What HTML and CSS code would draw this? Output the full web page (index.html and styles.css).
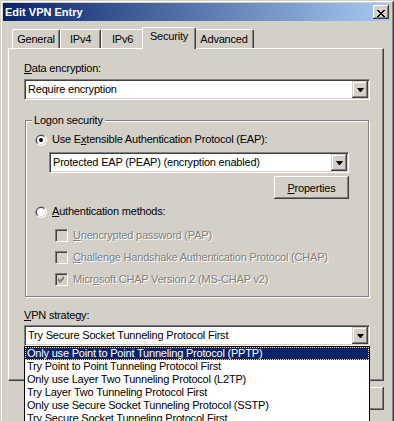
FILE: index.html
```html
<!DOCTYPE html>
<html lang="en">
<head>
    <meta charset="UTF-8">
    <meta name="viewport" content="width=device-width, initial-scale=1.0">
    <title>Edit VPN Entry</title>
    <link rel="stylesheet" href="styles.css">
</head>
<body>
    <div class="window">
        <div class="titlebar">
            <span class="title">Edit VPN Entry</span>
            <span class="close">
                <svg width="8" height="7" viewBox="0 0 8 7"><path fill="#000" d="M0 0h2v1h-2z M6 0h2v1h-2z M1 1h2v1h-2z M5 1h2v1h-2z M2 2h4v1h-4z M3 3h2v1h-2z M2 4h4v1h-4z M1 5h2v1h-2z M5 5h2v1h-2z M0 6h2v1h-2z M6 6h2v1h-2z"/></svg>
            </span>
        </div>

        <div class="client">
            <div class="tabs">
                <div class="tab tab-general">General</div>
                <div class="tab tab-ipv4">IPv4</div>
                <div class="tab tab-ipv6">IPv6</div>
                <div class="tab tab-security active">Security</div>
                <div class="tab tab-advanced">Advanced</div>
            </div>

            <div class="panel">
                <div class="field-label"><u>D</u>ata encryption:</div>
                <div class="combo">
                    <span class="combo-text">Require encryption</span>
                    <span class="combo-btn"><svg width="7" height="4" viewBox="0 0 7 4"><polygon points="0,0 7,0 4,4 3,4" fill="#000"/></svg></span>
                </div>

                <fieldset class="group">
                    <legend>Logon security</legend>

                    <div class="option">
                        <svg class="radio" width="12" height="12" viewBox="0 0 12 12">
                            <circle cx="6" cy="6" r="6" fill="#fff"/>
                            <path d="M1.76 10.24 A6 6 0 0 1 10.24 1.76 Z" fill="#808080"/>
                            <circle cx="6" cy="6" r="5" fill="#d4d0c8"/>
                            <path d="M2.46 9.54 A5 5 0 0 1 9.54 2.46 Z" fill="#404040"/>
                            <circle cx="6" cy="6" r="4" fill="#fff"/>
                            <circle cx="6" cy="6" r="2" fill="#000"/>
                        </svg>
                        <span>Use E<u>x</u>tensible Authentication Protocol (EAP):</span>
                    </div>

                    <div class="combo combo-eap">
                        <span class="combo-text">Protected EAP (PEAP) (encryption enabled)</span>
                        <span class="combo-btn"><svg width="7" height="4" viewBox="0 0 7 4"><polygon points="0,0 7,0 4,4 3,4" fill="#000"/></svg></span>
                    </div>

                    <div class="btn-row">
                        <button class="btn"><u>P</u>roperties</button>
                    </div>

                    <div class="option option-auth">
                        <svg class="radio" width="12" height="12" viewBox="0 0 12 12">
                            <circle cx="6" cy="6" r="6" fill="#fff"/>
                            <path d="M1.76 10.24 A6 6 0 0 1 10.24 1.76 Z" fill="#808080"/>
                            <circle cx="6" cy="6" r="5" fill="#d4d0c8"/>
                            <path d="M2.46 9.54 A5 5 0 0 1 9.54 2.46 Z" fill="#404040"/>
                            <circle cx="6" cy="6" r="4" fill="#fff"/>
                        </svg>
                        <span><u>A</u>uthentication methods:</span>
                    </div>

                    <div class="check disabled">
                        <span class="box"></span>
                        <span><u>U</u>nencrypted password (PAP)</span>
                    </div>
                    <div class="check disabled">
                        <span class="box"></span>
                        <span><u>C</u>hallenge Handshake Authentication Protocol (CHAP)</span>
                    </div>
                    <div class="check disabled">
                        <span class="box">
                            <svg width="7" height="7" viewBox="0 0 7 7"><polygon points="0,2 2,4 6,0 6,3 2,7 0,5" fill="#808080"/></svg>
                        </span>
                        <span>Micr<u>o</u>soft CHAP Version 2 (MS-CHAP v2)</span>
                    </div>
                </fieldset>

                <div class="field-label label-vpn"><u>V</u>PN strategy:</div>
                <div class="combo-wrap">
                    <div class="combo">
                        <span class="combo-text">Try Secure Socket Tunneling Protocol First</span>
                        <span class="combo-btn"><svg width="7" height="4" viewBox="0 0 7 4"><polygon points="0,0 7,0 4,4 3,4" fill="#000"/></svg></span>
                    </div>
                    <ul class="dropdown">
                        <li class="selected">Only use Point to Point Tunneling Protocol (PPTP)</li>
                        <li>Try Point to Point Tunneling Protocol First</li>
                        <li>Only use Layer Two Tunneling Protocol (L2TP)</li>
                        <li>Try Layer Two Tunneling Protocol First</li>
                        <li>Only use Secure Socket Tunneling Protocol (SSTP)</li>
                        <li>Try Secure Socket Tunneling Protocol First</li>
                        <li>Automatic</li>
                    </ul>
                </div>
            </div>

            <div class="buttons">
                <button class="btn">OK</button>
                <button class="btn">Cancel</button>
            </div>
        </div>
    </div>
</body>
</html>
```

FILE: styles.css
```css
* {
    box-sizing: border-box;
}

body {
    margin: 0;
    width: 394px;
    height: 421px;
    overflow: hidden;
    background: #d4d0c8;
    font-family: "Liberation Sans", Arial, sans-serif;
    font-size: 11px;
    letter-spacing: -0.2px;
    color: #000;
}

u {
    text-decoration: underline;
    text-underline-offset: 1px;
}

.window {
    height: 460px;
    padding: 3px 4px 0 3px;
    background: #d4d0c8;
    box-shadow: inset 1px 1px 0 #d4d0c8, inset -1px -1px 0 #404040, inset 2px 2px 0 #fff, inset -2px -2px 0 #808080;
}

.titlebar {
    height: 18px;
    display: flex;
    align-items: center;
    justify-content: space-between;
    padding: 0 1px 0 2px;
    background: linear-gradient(to right, #0a246a, #a6caf0);
}

.title {
    color: #fff;
    font-weight: bold;
    letter-spacing: 0;
}

.close {
    width: 16px;
    height: 14px;
    display: flex;
    justify-content: center;
    align-items: center;
    padding-top: 2px;
    background: #d4d0c8;
    box-shadow: inset -1px -1px 0 #404040, inset 1px 1px 0 #fff, inset -2px -2px 0 #808080;
}

.close svg {
    display: block;
}

.client {
    padding: 6px 6px 0 5px;
}

/* tabs */

.tabs {
    display: flex;
    align-items: flex-end;
    height: 21px;
    padding-left: 4px;
}

.tab {
    height: 19px;
    padding-top: 3px;
    line-height: 13px;
    text-align: center;
    border-top: 1px solid #fff;
    border-left: 1px solid #fff;
    border-right: 1px solid #404040;
    border-radius: 2px 2px 0 0;
    box-shadow: inset -1px 0 0 #808080;
}

.tab-general { width: 48px; }
.tab-ipv4 { width: 41px; }
.tab-ipv6 { width: 43px; }
.tab-security { width: 50px; }
.tab-advanced { width: 60px; }

.tab.active {
    position: relative;
    z-index: 1;
    width: 54px;
    height: 22px;
    margin: 0 -2px -1px;
    padding-top: 2px;
    background: #d4d0c8;
}

.panel {
    height: 333px;
    padding: 13px 13px 0 15px;
    border: 1px solid;
    border-color: #fff #404040 #404040 #fff;
    box-shadow: inset -1px -1px 0 #808080;
}

.field-label {
    height: 13px;
    line-height: 13px;
}

/* combo boxes */

.combo {
    display: flex;
    height: 21px;
    margin-top: 4px;
    padding: 1px;
    background: #fff;
    border: 1px solid;
    border-color: #808080 #fff #fff #808080;
    box-shadow: inset 1px 1px 0 #404040, inset -1px -1px 0 #d4d0c8;
}

.combo-text {
    flex: 1;
    padding-left: 2px;
    line-height: 17px;
    white-space: nowrap;
    overflow: hidden;
}

.combo-btn {
    width: 16px;
    height: 17px;
    display: flex;
    justify-content: center;
    align-items: center;
    background: #d4d0c8;
    box-shadow: inset -1px -1px 0 #404040, inset 1px 1px 0 #d4d0c8, inset -2px -2px 0 #808080, inset 2px 2px 0 #fff;
}

.combo-btn svg {
    display: block;
    margin-left: 1px;
}

/* group box */

.group {
    margin: 14px 1px 0;
    padding: 6px 0 10px;
    min-width: 0;
    border: 1px solid #808080;
    box-shadow: inset 1px 1px 0 #fff, 1px 1px 0 #fff;
}

.group legend {
    margin-left: 6px;
    padding: 0 2px;
    line-height: 13px;
    background: #d4d0c8;
}

.option {
    display: flex;
    align-items: center;
    gap: 5px;
    height: 13px;
    line-height: 13px;
    padding-left: 9px;
}

.radio {
    display: block;
    flex: none;
}

.combo-eap {
    margin: 6px 19px 0 23px;
}

.btn-row {
    display: flex;
    justify-content: flex-end;
    margin-top: 3px;
    padding-right: 19px;
}

.btn {
    width: 75px;
    height: 23px;
    padding: 0;
    border: none;
    background: #d4d0c8;
    font-family: inherit;
    font-size: 11px;
    letter-spacing: inherit;
    color: #000;
    box-shadow: inset -1px -1px 0 #404040, inset 1px 1px 0 #fff, inset -2px -2px 0 #808080;
}

.option-auth {
    margin-top: 6px;
}

.check {
    display: flex;
    align-items: center;
    gap: 5px;
    height: 13px;
    line-height: 13px;
    margin-top: 9px;
    padding-left: 29px;
}

.option-auth + .check {
    margin-top: 11px;
}

.check .box {
    width: 13px;
    height: 13px;
    flex: none;
    display: flex;
    justify-content: center;
    align-items: center;
    background: #d4d0c8;
    border: 1px solid;
    border-color: #808080 #fff #fff #808080;
    box-shadow: inset 1px 1px 0 #404040, inset -1px -1px 0 #d4d0c8;
}

.check .box svg {
    display: block;
}

.disabled {
    color: #808080;
    text-shadow: 1px 1px 0 #fff;
}

.label-vpn {
    margin-top: 12px;
}

.combo-wrap {
    position: relative;
    margin-top: -1px;
}

/* open drop-down list */

.dropdown {
    position: absolute;
    top: 100%;
    left: 0;
    right: 0;
    z-index: 5;
    margin: 0;
    padding: 0;
    list-style: none;
    background: #fff;
    border: 1px solid #000;
}

.dropdown li {
    height: 13px;
    line-height: 13px;
    padding-left: 2px;
    white-space: nowrap;
}

.dropdown li.selected {
    padding-left: 1px;
    line-height: 11px;
    color: #fff;
    background: #0a246a;
    border: 1px dotted #f5db95;
}

.buttons {
    display: flex;
    justify-content: flex-end;
    gap: 6px;
    margin-top: 6px;
}
```
